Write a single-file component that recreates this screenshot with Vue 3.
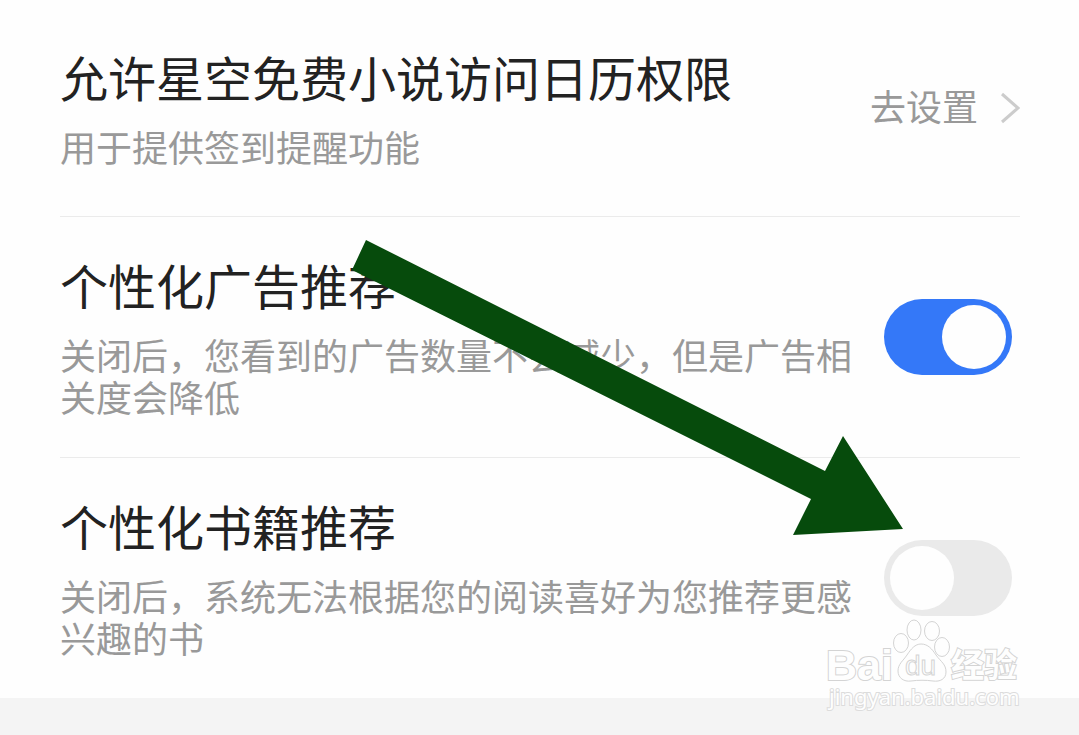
<script setup>
import { ref } from 'vue'

const adsEnabled = ref(true)
const booksEnabled = ref(false)
</script>

<template>
  <main class="page">
    <section class="settings">
      <div class="row row-first">
        <div class="info">
          <h2 class="title">允许星空免费小说访问日历权限</h2>
          <p class="desc">用于提供签到提醒功能</p>
        </div>
        <a class="go" href="#">
          <span class="go-text">去设置</span>
          <svg class="chevron" width="20" height="32" viewBox="0 0 20 32" aria-hidden="true">
            <path d="M2 2 L18 16 L2 30" />
          </svg>
        </a>
      </div>

      <div class="row">
        <div class="info">
          <h2 class="title"><label for="ads">个性化广告推荐</label></h2>
          <p class="desc">关闭后，您看到的广告数量不会减少，但是广告相关度会降低</p>
        </div>
        <input id="ads" v-model="adsEnabled" class="switch" type="checkbox" />
      </div>

      <div class="row">
        <div class="info">
          <h2 class="title"><label for="books">个性化书籍推荐</label></h2>
          <p class="desc">关闭后，系统无法根据您的阅读喜好为您推荐更感兴趣的书</p>
        </div>
        <input id="books" v-model="booksEnabled" class="switch" type="checkbox" />
      </div>
    </section>

    <svg class="arrow" width="552" height="296" viewBox="0 0 552 296" aria-hidden="true">
      <polygon points="15,0 474,231 492,196 552,289 442,295 460,259 1,30" />
    </svg>

    <svg class="watermark" width="208" height="100" viewBox="0 0 208 100" aria-hidden="true">
      <g class="outline">
        <text class="brand" x="3" y="63">Bai</text>
        <ellipse cx="78" cy="26" rx="7.5" ry="9.5" />
        <ellipse cx="91" cy="13" rx="7" ry="10" />
        <ellipse cx="109" cy="14" rx="7.5" ry="9.5" />
        <ellipse cx="119" cy="30" rx="7.5" ry="9.5" />
        <path d="M98 27 C105 27 109 32 113 38 C118 45 123 47 123 55 C123 62 117 65 110 64 C103 63 95 63 88 64 C81 65 75 61 75 54 C75 47 80 44 84 38 C88 32 92 27 98 27 Z" />
        <text class="paw-text" x="82" y="58">du</text>
        <text class="brand-cn" x="128" y="60">经验</text>
        <text class="site" x="6" y="88">jingyan.baidu.com</text>
      </g>
    </svg>
  </main>
</template>

<style>
body {
  margin: 0;
  background: #f4f4f4;
}
</style>

<style scoped>
.page {
  position: relative;
  min-height: 100vh;
  overflow: hidden;
  background: #f4f4f4;
  font-family: "Noto Sans CJK SC", "Liberation Sans", sans-serif;
}

.settings {
  padding: 0 59px 0 60px;
  background: #fefefe;
}

.row {
  display: flex;
  align-items: center;
  gap: 24px;
  padding: 39px 0 40px;
  border-bottom: 1px solid #ebebeb;
}

.row-first {
  padding: 48px 0 49px;
}

.row:last-child {
  border-bottom: 0;
}

.info {
  flex: 1;
  min-width: 0;
}

.title {
  margin: 0 0 21px;
  color: #222;
  font-size: 48px;
  font-weight: 400;
  line-height: 56px;
}

.desc {
  margin: 0;
  color: #999;
  font-size: 36px;
  font-weight: 400;
  line-height: 42px;
}

.go {
  display: flex;
  align-items: center;
  gap: 22px;
  color: #999;
  font-size: 36px;
  line-height: 42px;
  text-decoration: none;
}

.go-text {
  padding-bottom: 6px;
}

.chevron path {
  fill: none;
  stroke: #ccc;
  stroke-width: 3;
}

.switch {
  flex: none;
  box-sizing: border-box;
  width: 128px;
  height: 76px;
  margin: 0 8px 0 0;
  padding: 6px;
  appearance: none;
  border-radius: 38px;
  background: #eaeaea;
  cursor: pointer;
}

.switch::before {
  display: block;
  width: 64px;
  height: 64px;
  border-radius: 50%;
  background: #fefefe;
  content: "";
}

.switch:checked {
  background: #3478f8;
}

.switch:checked::before {
  margin-left: auto;
}

.arrow {
  position: absolute;
  top: 240px;
  left: 351px;
  fill: #064b0c;
  pointer-events: none;
}

.watermark {
  position: absolute;
  top: 617px;
  right: 48px;
  pointer-events: none;
}

.outline {
  fill: #fefefe;
  stroke: #d4d4d4;
  stroke-width: 1;
}

.brand {
  font: 700 43px "Liberation Sans", sans-serif;
  stroke-width: 2;
  paint-order: stroke;
}

.paw-text {
  font: 400 28px "Liberation Sans", sans-serif;
}

.brand-cn {
  font: 700 33px "Noto Sans CJK SC", sans-serif;
  stroke-width: 2;
  paint-order: stroke;
}

.site {
  font: 400 22px "Noto Sans", sans-serif;
  stroke: #dcdcdc;
  stroke-width: 2;
  paint-order: stroke;
}
</style>
